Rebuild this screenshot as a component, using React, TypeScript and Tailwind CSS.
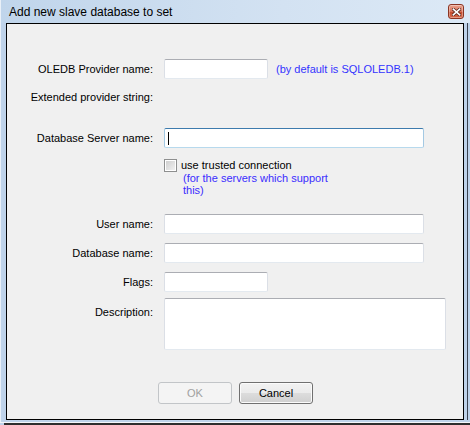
import type { ReactNode } from 'react';

const field =
    'bg-white rounded-[2px] border border-t-[#abadb3] border-x-[#dbdfe6] border-b-[#e3e9ef]';

function Row({ label, children, top = false }: { label: string; children: ReactNode; top?: boolean }) {
    return (
        <div className={`flex ${top ? 'items-start' : 'items-center'}`}>
            <div className={`w-[146px] text-right ${top ? 'pt-[8px]' : ''}`}>{label}</div>
            <div className="ml-[11px] flex items-center">{children}</div>
        </div>
    );
}

function CloseButton() {
    return (
        <div className="w-[16px] h-[15px] rounded-[3px] border border-[#8b3523] bg-[linear-gradient(to_bottom,#eba48f_0%,#d9725a_50%,#c44a2c_51%,#d8694a_100%)] flex items-center justify-center shadow-[inset_0_0_0_1px_rgba(255,255,255,0.35)]">
            <svg width="9" height="8" viewBox="0 0 9 8">
                <path d="M1 1 L8 7 M8 1 L1 7" stroke="#5a2418" strokeWidth="3.2" strokeLinecap="square" />
                <path d="M1.3 1.2 L7.7 6.8 M7.7 1.2 L1.3 6.8" stroke="#ffffff" strokeWidth="1.6" strokeLinecap="square" />
            </svg>
        </div>
    );
}

export default function App() {
    return (
        <div className="w-[470px] h-[425px] flex flex-col bg-[#bfd3ea] font-['Liberation_Sans',Arial,sans-serif] text-[11px] leading-[13px] text-black overflow-hidden">
            {/* Title bar */}
            <div className="h-[23px] flex items-center justify-between pl-[8px] pr-[6px] bg-[linear-gradient(to_right,#c0d5eb,#d3e2f2_60%,#dce9f6)] border-l border-[#e9f0f8]">
                <span className="text-[12px] leading-[14px]">Add new slave database to set</span>
                <CloseButton />
            </div>

            {/* Frame + client area */}
            <div className="flex border-l border-[#e9f0f8] pl-[5px]">
                <div className="w-[458px] h-[397px] border border-black bg-[#f0f0f0] pt-[35px] flex flex-col">
                    <Row label="OLEDB Provider name:">
                        <div className={`${field} w-[104px] h-[20px]`} />
                        <span className="ml-[8px] text-[#3434ff]">(by default is SQLOLEDB.1)</span>
                    </Row>

                    <div className="mt-[8px] h-[20px] flex items-center">
                        <div className="w-[146px] text-right">Extended provider string:</div>
                    </div>

                    <div className="mt-[21px]">
                        <Row label="Database Server name:">
                            <div className="w-[260px] h-[20px] bg-white rounded-[2px] border border-t-[#3d7bad] border-x-[#a4c9e3] border-b-[#b7d9ed] flex items-center">
                                <div className="ml-[3px] w-px h-[13px] bg-black" />
                            </div>
                        </Row>
                    </div>

                    <div className="mt-[11px] ml-[157px] flex items-center">
                        <div className="w-[13px] h-[13px] border border-[#8e8f8f] bg-white p-px">
                            <div className="w-full h-full bg-[linear-gradient(135deg,#cfcfcf,#f0f0f0)]" />
                        </div>
                        <span className="ml-[4px]">use trusted connection</span>
                    </div>
                    <div className="ml-[176px] w-[152px] leading-[12px] text-[#3a2cff]">
                        (for the servers which support this)
                    </div>

                    <div className="mt-[18px]">
                        <Row label="User name:">
                            <div className={`${field} w-[260px] h-[20px]`} />
                        </Row>
                    </div>
                    <div className="mt-[9px]">
                        <Row label="Database name:">
                            <div className={`${field} w-[260px] h-[20px]`} />
                        </Row>
                    </div>
                    <div className="mt-[9px]">
                        <Row label="Flags:">
                            <div className={`${field} w-[104px] h-[20px]`} />
                        </Row>
                    </div>
                    <div className="mt-[6px]">
                        <Row label="Description:" top>
                            <div className={`${field} w-[282px] h-[52px]`} />
                        </Row>
                    </div>

                    {/* Buttons */}
                    <div className="mt-[32px] ml-[151px] flex gap-[7px]">
                        <div className="w-[74px] h-[22px] rounded-[3px] border border-[#c2c5c8] bg-[#f4f4f4] text-[#a0a0a0] flex items-center justify-center">
                            OK
                        </div>
                        <div className="w-[74px] h-[22px] rounded-[3px] border border-[#707070] bg-[linear-gradient(to_bottom,#f2f2f2_0%,#ebebeb_50%,#dddddd_50%,#cfcfcf_100%)] shadow-[inset_0_0_0_1px_#fbfbfb] flex items-center justify-center">
                            Cancel
                        </div>
                    </div>
                </div>
                <div className="ml-[3px] w-px h-[397px] bg-[#3a4250]" />
            </div>

            {/* Bottom frame edge */}
            <div className="h-[2px] border-l border-[#e9f0f8]" />
            <div className="h-px bg-[#f4f6f9]" />
            <div className="h-[2px] bg-[#2e2e2e] ml-[4px]" />
        </div>
    );
}
